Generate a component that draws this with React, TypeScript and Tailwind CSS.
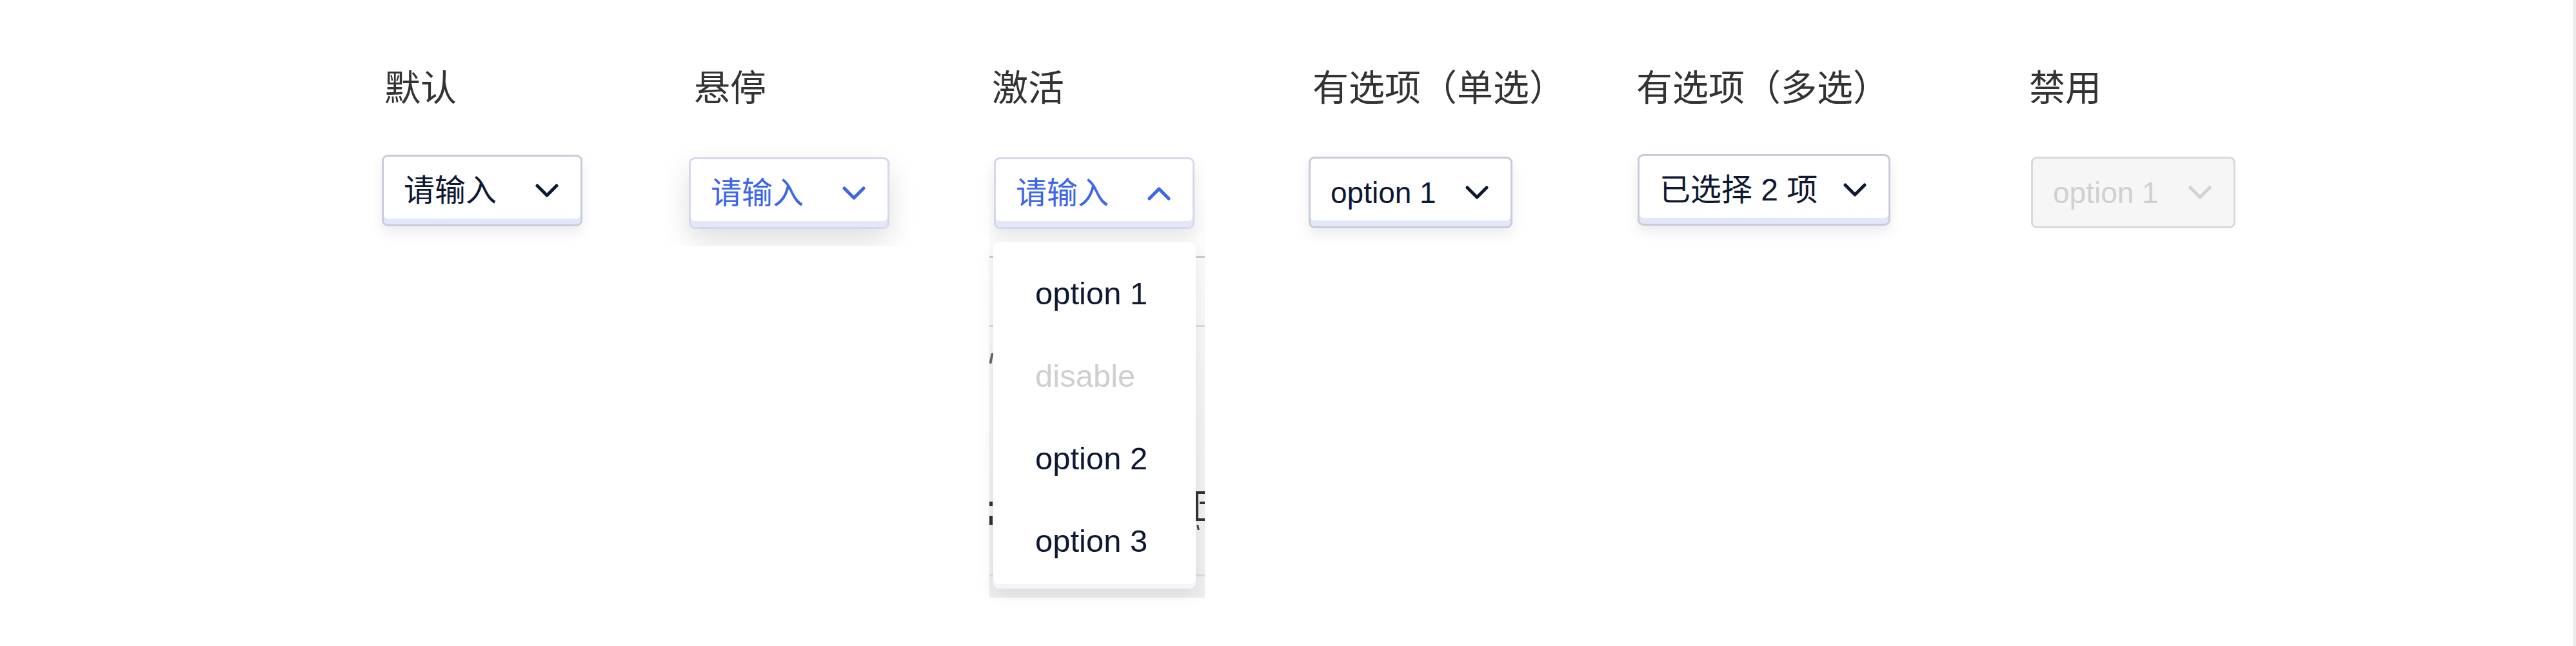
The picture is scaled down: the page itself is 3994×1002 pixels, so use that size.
import React from 'react';

type Tone = 'default' | 'hover' | 'active' | 'disabled';

const Chevron: React.FC<{ up?: boolean; color: string }> = ({ up, color }) => (
  <svg width="36" height="22" viewBox="0 0 36 22" fill="none" className="shrink-0">
    <polyline
      points={up ? '3,19 18,4 33,19' : '3,3 18,18 33,3'}
      stroke={color}
      strokeWidth="5"
      strokeLinecap="round"
      strokeLinejoin="round"
    />
  </svg>
);

const SelectBox: React.FC<{ text: string; width: number; tone: Tone; latin?: boolean; up?: boolean }> = ({
  text,
  width,
  tone,
  latin,
  up,
}) => {
  const disabled = tone === 'disabled';
  const blue = tone === 'hover' || tone === 'active';
  const iconColor = disabled ? '#d3d3d3' : blue ? '#3b66ea' : '#0e1833';
  return (
    <div
      style={{ width }}
      className={
        'h-[111px] rounded-[9px] border-[3px] flex items-center justify-between pl-[31px] pr-[34px] ' +
        (disabled
          ? 'bg-[#f6f6f6] border-[#d9d9d9]'
          : tone === 'hover'
            ? 'bg-white border-[#d5d8ec] shadow-[inset_0_-9px_0_#e3e7f9,0_18px_44px_rgba(0,0,0,0.13)]'
            : blue
              ? 'bg-white border-[#d5d8ec] shadow-[inset_0_-9px_0_#e3e7f9,0_12px_24px_rgba(0,0,0,0.09)]'
              : 'bg-white border-[#c7ccdb] shadow-[inset_0_-9px_0_#e3e7f9,0_10px_20px_rgba(0,0,0,0.08)]')
      }
    >
      <span
        className={
          'whitespace-pre leading-none font-["Liberation_Sans","Noto_Sans_CJK_SC",sans-serif] ' +
          (latin ? 'text-[46px] ' : 'text-[48px] ') +
          (disabled ? 'text-[#d0d0d0]' : blue ? 'text-[#3b66ea]' : 'text-[#0e1833]')
        }
      >
        {text}
      </span>
      <Chevron up={up} color={iconColor} />
    </div>
  );
};

const Label: React.FC<{ children: React.ReactNode; className?: string }> = ({ children, className }) => (
  <div
    className={
      'text-[56px] leading-none text-[#333333] whitespace-nowrap font-["Noto_Sans_CJK_SC",sans-serif] ' +
      (className ?? '')
    }
  >
    {children}
  </div>
);

const options = [
  { label: 'option 1' },
  { label: 'disable', disabled: true },
  { label: 'option 2' },
  { label: 'option 3' },
];

export default function App() {
  return (
    <div className="relative w-[3994px] h-[1002px] bg-white overflow-hidden">
      <div className="flex pl-[592px] pt-[104px]">
        {/* 默认 */}
        <div className="w-[476px] shrink-0">
          <Label className="pl-[4px]">默认</Label>
          <div className="mt-[80px]">
            <SelectBox text="请输入" width={311} tone="default" />
          </div>
        </div>

        {/* 悬停 */}
        <div className="w-[470px] shrink-0">
          <Label className="pl-[8px]">悬停</Label>
          <div className="mt-[54px] -mx-[40px] px-[40px] pt-[30px] pb-[27px] overflow-hidden">
            <SelectBox text="请输入" width={311} tone="hover" />
          </div>
        </div>

        {/* 激活 */}
        <div className="w-[491px] shrink-0">
          <Label>激活</Label>
          <div className="relative mt-[84px] ml-[3px] w-[311px]">
            {/* page content showing at the sides of the open menu */}
            <div className="absolute left-[-7px] top-[40px] w-[334px] h-[643px] overflow-hidden bg-gradient-to-b from-white via-[#f3f3f3] to-[#eeeeee]">
              <div className="absolute left-0 right-0 top-[113px] h-[3px] bg-[#cdcdcd]" />
              <div className="absolute left-0 right-0 top-[220px] h-[3px] bg-[#dcdcdc]" />
              <div className="absolute left-0 right-0 top-[607px] h-[3px] bg-[#dcdcdc]" />
              <div className="absolute left-[1px] top-[264px] w-[4px] h-[16px] bg-[#666] -skew-x-12" />
              <div className="absolute left-0 top-[494px] w-[5px] h-[7px] bg-[#333]" />
              <div className="absolute left-0 top-[516px] w-[5px] h-[14px] bg-[#333]" />
              <div className="absolute left-[320px] top-[478px] w-[14px] h-[46px] border-l-[4px] border-y-[4px] border-[#333]" />
              <div className="absolute left-[326px] top-[494px] w-[8px] h-[4px] bg-[#333]" />
              <div className="absolute left-[322px] top-[530px] w-[3px] h-[8px] bg-[#444] skew-x-12" />
            </div>
            <div className="relative">
              <SelectBox text="请输入" width={311} tone="active" up />
            </div>
            <div className="relative mt-[20px] w-[314px] -ml-[1px] rounded-[9px] bg-white pt-[16px] pb-[10px] shadow-[inset_0_-7px_0_#f4f5fc,0_10px_24px_rgba(0,0,0,0.08)]">
              {options.map((o) => (
                <div
                  key={o.label}
                  className={
                    'h-[128px] flex items-center pl-[65px] text-[49px] leading-none font-["Liberation_Sans",sans-serif] ' +
                    (o.disabled ? 'text-[#cfcfcf]' : 'text-[#0e1833]')
                  }
                >
                  {o.label}
                </div>
              ))}
            </div>
          </div>
        </div>

        {/* 有选项（单选） */}
        <div className="w-[508px] shrink-0">
          <Label className="pl-[6px]">有选项（单选）</Label>
          <div className="mt-[83px]">
            <SelectBox text="option 1" width={316} tone="default" latin />
          </div>
        </div>

        {/* 有选项（多选） */}
        <div className="w-[609px] shrink-0">
          <Label>有选项（多选）</Label>
          <div className="mt-[79px] ml-[2px]">
            <SelectBox text="已选择 2 项" width={392} tone="default" />
          </div>
        </div>

        {/* 禁用 */}
        <div className="w-[400px] shrink-0">
          <Label>禁用</Label>
          <div className="mt-[83px] ml-[3px]">
            <SelectBox text="option 1" width={317} tone="disabled" latin />
          </div>
        </div>
      </div>

      <div className="absolute right-0 top-0 w-[4px] h-full bg-[#ececec] border-l border-[#dedede]" />
    </div>
  );
}
